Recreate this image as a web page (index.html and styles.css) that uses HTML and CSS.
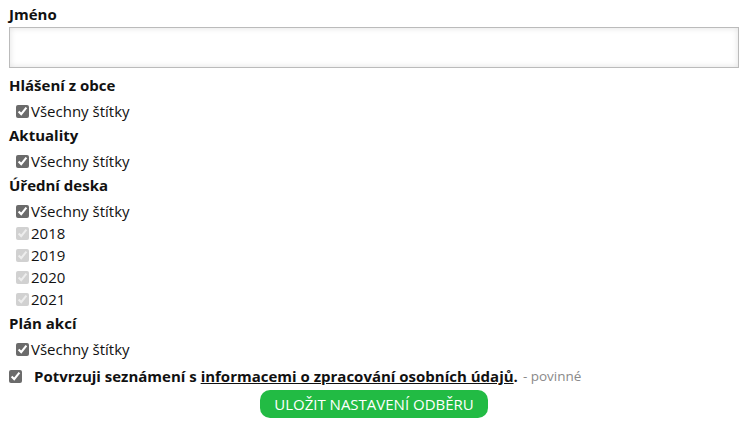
FILE: index.html
```html
<!DOCTYPE html>
<html>
  <head>
    <title>Nastavení odběru</title>
    <link rel="stylesheet" href="styles.css">
  </head>
  <body>
    <form class="subscribe">
      <label class="field-label" for="name">Jméno</label>
      <input id="name" class="text-input" type="text" />

      <div class="group">
        <h4>Hlášení z obce</h4>
        <label class="check"><input type="checkbox" checked />Všechny štítky</label>
      </div>

      <div class="group">
        <h4>Aktuality</h4>
        <label class="check"><input type="checkbox" checked />Všechny štítky</label>
      </div>

      <div class="group">
        <h4>Úřední deska</h4>
        <label class="check"><input type="checkbox" checked />Všechny štítky</label>
        <label class="check"><input type="checkbox" checked disabled />2018</label>
        <label class="check"><input type="checkbox" checked disabled />2019</label>
        <label class="check"><input type="checkbox" checked disabled />2020</label>
        <label class="check"><input type="checkbox" checked disabled />2021</label>
      </div>

      <div class="group">
        <h4>Plán akcí</h4>
        <label class="check"><input type="checkbox" checked />Všechny štítky</label>
      </div>

      <label class="consent">
        <input type="checkbox" checked />
        <strong>Potvrzuji seznámení s <a href="#">informacemi o zpracování osobních údajů</a>.</strong>
        <span class="required">- povinné</span>
      </label>

      <div class="actions">
        <button type="submit">Uložit nastavení odběru</button>
      </div>
    </form>
  </body>
</html>
```

FILE: styles.css
```css
* {
  box-sizing: border-box;
}
body {
  margin: 0;
  padding: 3px 7px 0 9px;
  font-family: "Open Sans", "Noto Sans", sans-serif;
  font-size: 15px;
  color: #111;
  background: #fff;
}
.subscribe {
  display: flex;
  flex-direction: column;
}
.field-label,
.group h4 {
  margin: 0;
  font-size: 15px;
  font-weight: 700;
  line-height: 22px;
}
.text-input {
  display: block;
  width: 100%;
  height: 41px;
  margin: 2px 0 6px;
  border: 1px solid #bbb;
  box-shadow: inset 0 0 6px rgba(0, 0, 0, 0.12);
  font: inherit;
  padding: 0 8px;
}
.group {
  display: flex;
  flex-direction: column;
  margin-bottom: 2px;

  h4 {
    margin-bottom: 4px;
  }
}
.check {
  display: flex;
  align-items: center;
  padding-left: 3px;
  line-height: 22px;
  font-size: 15px;

  input {
    margin: 0 2px 0 4px;
    accent-color: #6b6b6b;
  }
}
.consent {
  display: flex;
  align-items: center;
  line-height: 22px;
  margin-top: 3px;

  input {
    margin: 0 12px 0 0;
    accent-color: #6b6b6b;
  }
  strong {
    font-size: 15px;
  }
  a {
    color: #111;
  }
  .required {
    margin-left: 5px;
    color: #8a8a8a;
    font-size: 13.5px;
  }
}
.actions {
  display: flex;
  justify-content: center;
  margin-top: 3px;

  button {
    height: 28px;
    padding: 0 14px;
    border: none;
    border-radius: 10px;
    background: #22bb44;
    color: #fff;
    font-family: inherit;
    font-size: 15px;
    text-transform: uppercase;
  }
}
```
